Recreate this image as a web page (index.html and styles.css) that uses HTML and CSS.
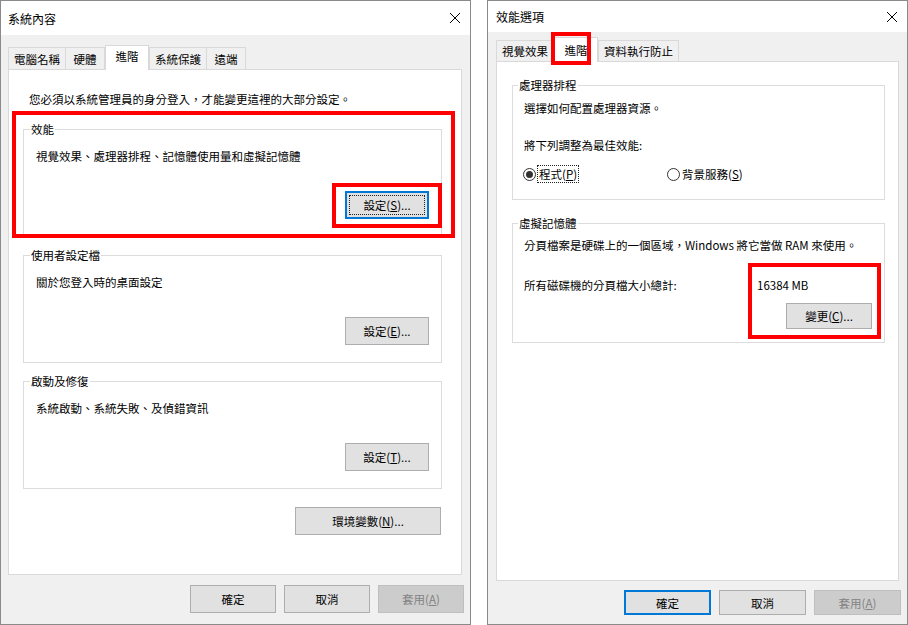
FILE: index.html
```html
<!DOCTYPE html>
<html lang="zh-Hant">
<head>
<meta charset="utf-8">
<title>系統內容 / 效能選項</title>
<link rel="stylesheet" href="styles.css">
</head>
<body>
<div class="screen">
  <div class="dialog dlg-left">
    <div class="titlebar">
      <span class="title">系統內容</span>
      <svg class="close" viewBox="0 0 10 10"><path d="M0 0L10 10M10 0L0 10"/></svg>
    </div>
    <div class="tabs">
      <div class="tab">電腦名稱</div>
      <div class="tab">硬體</div>
      <div class="tab active">進階</div>
      <div class="tab">系統保護</div>
      <div class="tab">遠端</div>
    </div>
    <div class="panel">
      <div class="intro">您必須以系統管理員的身分登入，才能變更這裡的大部分設定。</div>
      <div class="group">
        <div class="gtitle">效能</div>
        <div class="gdesc">視覺效果、處理器排程、記憶體使用量和虛擬記憶體</div>
        <div class="gactions"><button class="btn btn-grp default focused"><span>設定(<u>S</u>)...</span></button></div>
      </div>
      <div class="group">
        <div class="gtitle">使用者設定檔</div>
        <div class="gdesc">關於您登入時的桌面設定</div>
        <div class="gactions"><button class="btn btn-grp">設定(<u>E</u>)...</button></div>
      </div>
      <div class="group">
        <div class="gtitle">啟動及修復</div>
        <div class="gdesc">系統啟動、系統失敗、及偵錯資訊</div>
        <div class="gactions"><button class="btn btn-grp">設定(<u>T</u>)...</button></div>
      </div>
      <div class="envrow"><button class="btn btn-env">環境變數(<u>N</u>)...</button></div>
    </div>
    <div class="footer">
      <button class="btn btn-foot">確定</button>
      <button class="btn btn-foot">取消</button>
      <button class="btn btn-foot disabled">套用(<u>A</u>)</button>
    </div>
    <div class="mark mark-perf"></div>
    <div class="mark mark-settings"></div>
  </div>

  <div class="dialog dlg-right">
    <div class="titlebar">
      <span class="title">效能選項</span>
      <svg class="close" viewBox="0 0 10 10"><path d="M0 0L10 10M10 0L0 10"/></svg>
    </div>
    <div class="tabs">
      <div class="tab">視覺效果</div>
      <div class="tab active">進階</div>
      <div class="tab">資料執行防止</div>
    </div>
    <div class="panel">
      <div class="group grp-cpu">
        <div class="gtitle">處理器排程</div>
        <div class="line cpu-desc">選擇如何配置處理器資源。</div>
        <div class="line cpu-adjust">將下列調整為最佳效能:</div>
        <div class="radios">
          <div class="radio">
            <svg class="rb" viewBox="0 0 13 13"><circle cx="6.5" cy="6.5" r="6" class="ring"/><circle cx="6.5" cy="6.5" r="3.5" class="dot"/></svg>
            <span class="focus-label">程式(<u>P</u>)</span>
          </div>
          <div class="radio">
            <svg class="rb" viewBox="0 0 13 13"><circle cx="6.5" cy="6.5" r="6" class="ring"/></svg>
            <span>背景服務(<u>S</u>)</span>
          </div>
        </div>
      </div>
      <div class="group grp-vm">
        <div class="gtitle">虛擬記憶體</div>
        <div class="line vm-desc">分頁檔案是硬碟上的一個區域，Windows 將它當做 RAM 來使用。</div>
        <div class="sizerow">
          <span>所有磁碟機的分頁檔大小總計:</span>
          <span>16384 MB</span>
        </div>
        <div class="gactions vm-actions"><button class="btn btn-change">變更(<u>C</u>)...</button></div>
      </div>
    </div>
    <div class="footer">
      <button class="btn btn-foot2 default">確定</button>
      <button class="btn btn-foot2">取消</button>
      <button class="btn btn-foot2 disabled">套用(<u>A</u>)</button>
    </div>
    <div class="mark mark-tab"></div>
    <div class="mark mark-size"></div>
  </div>
</div>
</body>
</html>
```

FILE: styles.css
```css
* { box-sizing: border-box; }
html, body { margin: 0; padding: 0; background: #fff; }
body {
  font-family: "Noto Sans CJK TC", "Noto Sans", sans-serif;
  font-size: 11.5px;
  color: #000;
}
.screen { display: flex; gap: 16px; width: 908px; height: 625px; }

.dialog {
  position: relative;
  display: flex;
  flex-direction: column;
  height: 625px;
  background: #f0f0f0;
  border: 1px solid #8a8a8a;
}
.dlg-left { width: 471px; }
.dlg-right { width: 421px; }

.titlebar {
  display: flex;
  align-items: center;
  justify-content: space-between;
  background: #fff;
  font-size: 12px;
  flex: none;
}
.dlg-left .titlebar { height: 34px; padding: 0 10px 0 7px; }
.dlg-right .titlebar { height: 31px; padding: 0 10px 0 8px; }
.close { width: 10px; height: 10px; }
.close path { stroke: #000; stroke-width: 1; fill: none; }

.tabs { display: flex; align-items: flex-end; flex: none; }
.dlg-left .tabs { padding: 10px 0 0 7px; }
.dlg-right .tabs { padding: 5px 0 0 8px; }
.tab {
  border: 1px solid #d9d9d9;
  border-bottom: none;
  background: #f0f0f0;
  min-width: 40px;
  padding: 1px 5px 0;
  text-align: center;
  white-space: nowrap;
  margin-right: -1px;
}
.dlg-left .tab { height: 22px; line-height: 20px; }
.dlg-right .tab { height: 21px; line-height: 19px; }
.tab.active {
  position: relative;
  z-index: 2;
  background: #fff;
  margin: 0 0 -1px 1px;
  min-width: 44px;
  padding-top: 0;
}
.dlg-left .tab.active { height: 25px; line-height: 20px; }
.dlg-right .tab.active { height: 25px; line-height: 20px; padding-top: 2px; }

.panel {
  flex: 1;
  background: #fff;
  border: 1px solid #d9d9d9;
}
.dlg-left .panel { margin: 0 8px 0 7px; padding: 21px 19px 0 14px; }
.dlg-right .panel { margin: 0 8px; padding: 23px 13px 0 15px; }

.intro { margin: 0 0 22px 6px; line-height: 16px; }

.group { border: 1px solid #dcdcdc; }
.gtitle {
  width: fit-content;
  margin: -9px 0 0 -6px;
  padding: 0 1px;
  background: #fff;
  line-height: 16px;
}
.gdesc, .line { line-height: 16px; }
.gactions { display: flex; justify-content: flex-end; }

.dlg-left .group { padding: 0 12px 17px 12px; }
.dlg-left .group + .group { margin-top: 18px; }
.dlg-left .gdesc { margin-top: 11px; }
.dlg-left .gactions { margin-top: 27px; }
.envrow { display: flex; justify-content: flex-end; margin-top: 18px; padding-right: 1px; }

.btn {
  font: inherit;
  color: #000;
  background: #e1e1e1;
  border: 1px solid #adadad;
  padding: 0;
  display: flex;
  align-items: center;
  justify-content: center;
  white-space: nowrap;
}
.btn u { text-underline-offset: 1px; }
.btn-grp { width: 84px; height: 28px; }
.btn-env { width: 146px; height: 28px; }
.btn-foot { width: 86px; height: 28px; }
.btn-foot2 { width: 87px; height: 25px; }
.btn-change { width: 86px; height: 26px; }
.btn.default { border-color: #0078d7; box-shadow: inset 0 0 0 1px #0078d7; }
.btn.focused { padding: 3px; }
.btn.focused > span {
  flex: 1;
  align-self: stretch;
  display: flex;
  align-items: center;
  justify-content: center;
  border: 1px dotted #222;
}
.btn.disabled { background: #cccccc; border-color: #bfbfbf; color: #838383; }

.footer { display: flex; justify-content: flex-end; gap: 8px; flex: none; }
.dlg-left .footer { padding: 10px 6px 11px 0; }
.dlg-right .footer { padding: 9px 6px 9px 0; }

/* right dialog groups */
.grp-cpu { padding: 0 12px 17px 11px; }
.cpu-desc { margin-top: 7px; }
.cpu-adjust { margin-top: 21px; }
.radios {
  display: grid;
  grid-template-columns: 144px auto;
  margin-top: 13px;
  line-height: 16px;
}
.radio { display: flex; align-items: center; gap: 2px; margin-left: -1px; }
.rb { width: 13px; height: 13px; flex: none; }
.rb .ring { fill: #fff; stroke: #333; stroke-width: 1; }
.rb .dot { fill: #333; }
.focus-label { outline: 1px dotted #222; outline-offset: 0; padding: 0 1px; }

.grp-vm { margin-top: 23px; padding: 0 12px 13px 11px; }
.vm-desc { margin-top: 6px; }
.sizerow {
  display: grid;
  grid-template-columns: 233px auto;
  margin-top: 24px;
  line-height: 16px;
}
.vm-actions { margin-top: 10px; }

/* annotation boxes */
.mark {
  position: absolute;
  border: 4px solid #ff0000;
  z-index: 5;
  pointer-events: none;
}
.mark-perf { left: 11px; top: 110px; width: 443px; height: 127px; }
.mark-settings { left: 331px; top: 182px; width: 110px; height: 45px; }
.mark-tab { left: 63px; top: 31px; width: 40px; height: 33px; }
.mark-size { left: 260px; top: 262px; width: 133px; height: 76px; }
```
